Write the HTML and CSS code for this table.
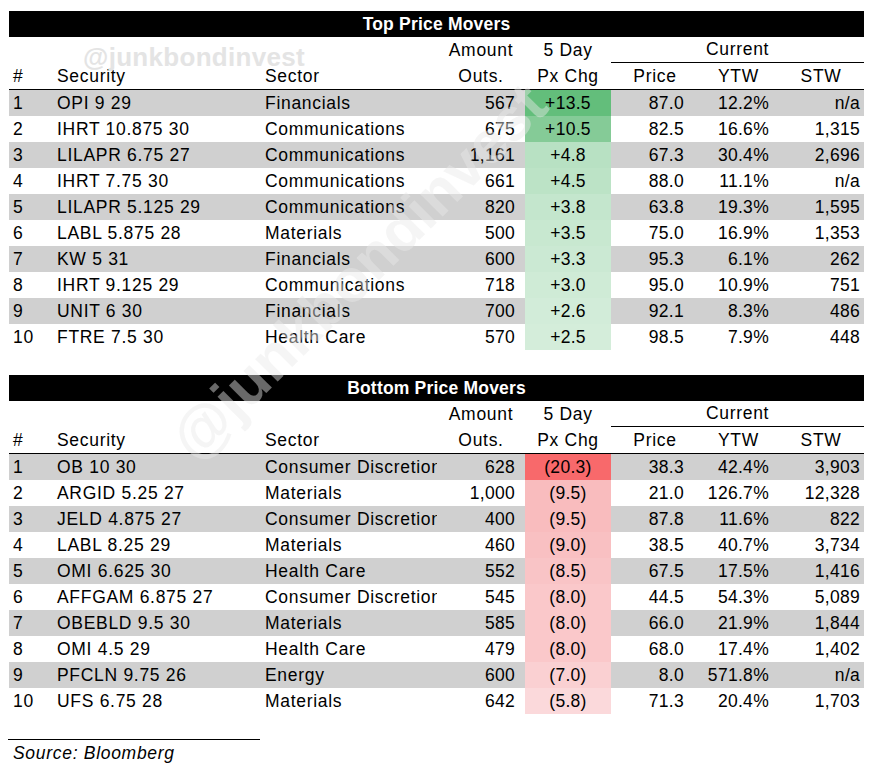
FILE: index.html
```html
<!DOCTYPE html>
<html>
<head>
<meta charset="utf-8">
<link rel="stylesheet" href="styles.css">
</head>
<body>
<div class="page">
  <table class="movers">
    <colgroup>
      <col class="c-num"><col class="c-sec"><col class="c-sector"><col class="c-amt"><col class="c-chg"><col class="c-price"><col class="c-ytw"><col class="c-stw">
    </colgroup>
    <thead>
      <tr><th colspan="8" class="title">Top Price Movers</th></tr>
      <tr class="h1">
        <th></th><th></th><th></th>
        <th class="ctr">Amount</th><th class="ctr">5 Day</th>
        <th colspan="3" class="ctr current">Current</th>
      </tr>
      <tr class="h2">
        <th class="lft">#</th><th class="lft">Security</th><th class="lft">Sector</th>
        <th class="ctr">Outs.</th><th class="ctr">Px Chg</th>
        <th class="ctr">Price</th><th class="ctr">YTW</th><th class="ctr">STW</th>
      </tr>
    </thead>
    <tbody>
      <tr><td class="num">1</td><td class="sec">OPI 9 29</td><td class="sector">Financials</td><td class="amt">567</td><td class="chg" style="background:#63be7b">+13.5</td><td class="price">87.0</td><td class="ytw">12.2%</td><td class="stw">n/a</td></tr>
      <tr><td class="num">2</td><td class="sec">IHRT 10.875 30</td><td class="sector">Communications</td><td class="amt">675</td><td class="chg" style="background:#85cb97">+10.5</td><td class="price">82.5</td><td class="ytw">16.6%</td><td class="stw">1,315</td></tr>
      <tr><td class="num">3</td><td class="sec">LILAPR 6.75 27</td><td class="sector">Communications</td><td class="amt">1,161</td><td class="chg" style="background:#b8e1c3">+4.8</td><td class="price">67.3</td><td class="ytw">30.4%</td><td class="stw">2,696</td></tr>
      <tr><td class="num">4</td><td class="sec">IHRT 7.75 30</td><td class="sector">Communications</td><td class="amt">661</td><td class="chg" style="background:#bce3c6">+4.5</td><td class="price">88.0</td><td class="ytw">11.1%</td><td class="stw">n/a</td></tr>
      <tr><td class="num">5</td><td class="sec">LILAPR 5.125 29</td><td class="sector">Communications</td><td class="amt">820</td><td class="chg" style="background:#c4e6cd">+3.8</td><td class="price">63.8</td><td class="ytw">19.3%</td><td class="stw">1,595</td></tr>
      <tr><td class="num">6</td><td class="sec">LABL 5.875 28</td><td class="sector">Materials</td><td class="amt">500</td><td class="chg" style="background:#c8e8d0">+3.5</td><td class="price">75.0</td><td class="ytw">16.9%</td><td class="stw">1,353</td></tr>
      <tr><td class="num">7</td><td class="sec">KW 5 31</td><td class="sector">Financials</td><td class="amt">600</td><td class="chg" style="background:#cbe9d3">+3.3</td><td class="price">95.3</td><td class="ytw">6.1%</td><td class="stw">262</td></tr>
      <tr><td class="num">8</td><td class="sec">IHRT 9.125 29</td><td class="sector">Communications</td><td class="amt">718</td><td class="chg" style="background:#cfebd6">+3.0</td><td class="price">95.0</td><td class="ytw">10.9%</td><td class="stw">751</td></tr>
      <tr><td class="num">9</td><td class="sec">UNIT 6 30</td><td class="sector">Financials</td><td class="amt">700</td><td class="chg" style="background:#d2ecd9">+2.6</td><td class="price">92.1</td><td class="ytw">8.3%</td><td class="stw">486</td></tr>
      <tr><td class="num">10</td><td class="sec">FTRE 7.5 30</td><td class="sector">Health Care</td><td class="amt">570</td><td class="chg" style="background:#d4edda">+2.5</td><td class="price">98.5</td><td class="ytw">7.9%</td><td class="stw">448</td></tr>
    </tbody>
  </table>

  <table class="movers bottom">
    <colgroup>
      <col class="c-num"><col class="c-sec"><col class="c-sector"><col class="c-amt"><col class="c-chg"><col class="c-price"><col class="c-ytw"><col class="c-stw">
    </colgroup>
    <thead>
      <tr><th colspan="8" class="title">Bottom Price Movers</th></tr>
      <tr class="h1">
        <th></th><th></th><th></th>
        <th class="ctr">Amount</th><th class="ctr">5 Day</th>
        <th colspan="3" class="ctr current">Current</th>
      </tr>
      <tr class="h2">
        <th class="lft">#</th><th class="lft">Security</th><th class="lft">Sector</th>
        <th class="ctr">Outs.</th><th class="ctr">Px Chg</th>
        <th class="ctr">Price</th><th class="ctr">YTW</th><th class="ctr">STW</th>
      </tr>
    </thead>
    <tbody>
      <tr><td class="num">1</td><td class="sec">OB 10 30</td><td class="sector">Consumer Discretionary</td><td class="amt">628</td><td class="chg" style="background:#f8696b">(20.3)</td><td class="price">38.3</td><td class="ytw">42.4%</td><td class="stw">3,903</td></tr>
      <tr><td class="num">2</td><td class="sec">ARGID 5.25 27</td><td class="sector">Materials</td><td class="amt">1,000</td><td class="chg" style="background:#f9bcbe">(9.5)</td><td class="price">21.0</td><td class="ytw">126.7%</td><td class="stw">12,328</td></tr>
      <tr><td class="num">3</td><td class="sec">JELD 4.875 27</td><td class="sector">Consumer Discretionary</td><td class="amt">400</td><td class="chg" style="background:#f9bcbe">(9.5)</td><td class="price">87.8</td><td class="ytw">11.6%</td><td class="stw">822</td></tr>
      <tr><td class="num">4</td><td class="sec">LABL 8.25 29</td><td class="sector">Materials</td><td class="amt">460</td><td class="chg" style="background:#f9c0c2">(9.0)</td><td class="price">38.5</td><td class="ytw">40.7%</td><td class="stw">3,734</td></tr>
      <tr><td class="num">5</td><td class="sec">OMI 6.625 30</td><td class="sector">Health Care</td><td class="amt">552</td><td class="chg" style="background:#f9c4c6">(8.5)</td><td class="price">67.5</td><td class="ytw">17.5%</td><td class="stw">1,416</td></tr>
      <tr><td class="num">6</td><td class="sec">AFFGAM 6.875 27</td><td class="sector">Consumer Discretionary</td><td class="amt">545</td><td class="chg" style="background:#fac8ca">(8.0)</td><td class="price">44.5</td><td class="ytw">54.3%</td><td class="stw">5,089</td></tr>
      <tr><td class="num">7</td><td class="sec">OBEBLD 9.5 30</td><td class="sector">Materials</td><td class="amt">585</td><td class="chg" style="background:#fac8ca">(8.0)</td><td class="price">66.0</td><td class="ytw">21.9%</td><td class="stw">1,844</td></tr>
      <tr><td class="num">8</td><td class="sec">OMI 4.5 29</td><td class="sector">Health Care</td><td class="amt">479</td><td class="chg" style="background:#fac8ca">(8.0)</td><td class="price">68.0</td><td class="ytw">17.4%</td><td class="stw">1,402</td></tr>
      <tr><td class="num">9</td><td class="sec">PFCLN 9.75 26</td><td class="sector">Energy</td><td class="amt">600</td><td class="chg" style="background:#fad0d2">(7.0)</td><td class="price">8.0</td><td class="ytw">571.8%</td><td class="stw">n/a</td></tr>
      <tr><td class="num">10</td><td class="sec">UFS 6.75 28</td><td class="sector">Materials</td><td class="amt">642</td><td class="chg" style="background:#fbd9db">(5.8)</td><td class="price">71.3</td><td class="ytw">20.4%</td><td class="stw">1,703</td></tr>
    </tbody>
  </table>

  <div class="source">Source: Bloomberg</div>

  <div class="wm-small">@junkbondinvest</div>
  <div class="wm-big">@junkbondinvest</div>
</div>
</body>
</html>
```

FILE: styles.css
```css
html, body {
  margin: 0;
  padding: 0;
  background: #ffffff;
}

.page {
  position: relative;
  width: 880px;
  height: 767px;
  padding: 11px 0 0 9px;
  box-sizing: border-box;
  overflow: hidden;
  font-family: "Liberation Sans", Arial, sans-serif;
  color: #000;
}

.movers {
  width: 855px;
  table-layout: fixed;
  border-collapse: separate;
  border-spacing: 0;
  font-size: 17.5px;
  letter-spacing: 0.7px;
}

.movers.bottom {
  margin-top: 25px;
}

.c-num { width: 44px; }
.c-sec { width: 208px; }
.c-sector { width: 176px; }
.c-amt { width: 88px; }
.c-chg { width: 86px; }
.c-price { width: 88px; }
.c-ytw { width: 79px; }
.c-stw { width: 86px; }

.movers th,
.movers td {
  padding: 0;
  height: 26px;
  line-height: 26px;
  white-space: nowrap;
  overflow: hidden;
  font-weight: normal;
  vertical-align: middle;
}

.movers th.title {
  background: #000;
  color: #fff;
  font-weight: bold;
  font-size: 17.5px;
  letter-spacing: 0.2px;
  text-align: center;
}

.movers .ctr { text-align: center; }
.movers .lft { text-align: left; padding-left: 4px; }

.movers th.current {
  height: 25px;
  line-height: 25px;
  border-bottom: 1px solid #000;
}

.movers .h2 th {
  border-bottom: 1px solid #000;
}

.movers tbody tr:nth-child(odd) td {
  background: #d0d0d0;
}

.movers td.num,
.movers td.sec,
.movers td.sector {
  text-align: left;
  padding-left: 4px;
}

.movers td.amt,
.movers td.chg,
.movers td.price,
.movers td.ytw,
.movers td.stw {
  letter-spacing: 0.3px;
}

.movers td.amt { text-align: right; padding-right: 10px; }
.movers td.chg { text-align: center; }
.movers td.price { text-align: right; padding-right: 15px; }
.movers td.ytw { text-align: right; padding-right: 9px; }
.movers td.stw { text-align: right; padding-right: 4px; }

.source {
  box-sizing: border-box;
  margin-top: 25px;
  width: 252px;
  margin-left: -1px;
  border-top: 1px solid #000;
  padding-left: 5px;
  font-style: italic;
  font-size: 17.5px;
  letter-spacing: 0.7px;
  line-height: 27px;
}

.wm-small {
  position: absolute;
  left: 83px;
  top: 49px;
  font-size: 26px;
  line-height: 16px;
  font-weight: bold;
  letter-spacing: 0.3px;
  color: #e4e4e4;
  pointer-events: none;
}

.wm-big {
  position: absolute;
  left: 108px;
  top: 242px;
  width: 502px;
  font-size: 60px;
  line-height: 60px;
  font-weight: bold;
  color: rgba(232, 232, 232, 0.45);
  transform: rotate(-45deg);
  transform-origin: center center;
  white-space: nowrap;
  pointer-events: none;
}
```
